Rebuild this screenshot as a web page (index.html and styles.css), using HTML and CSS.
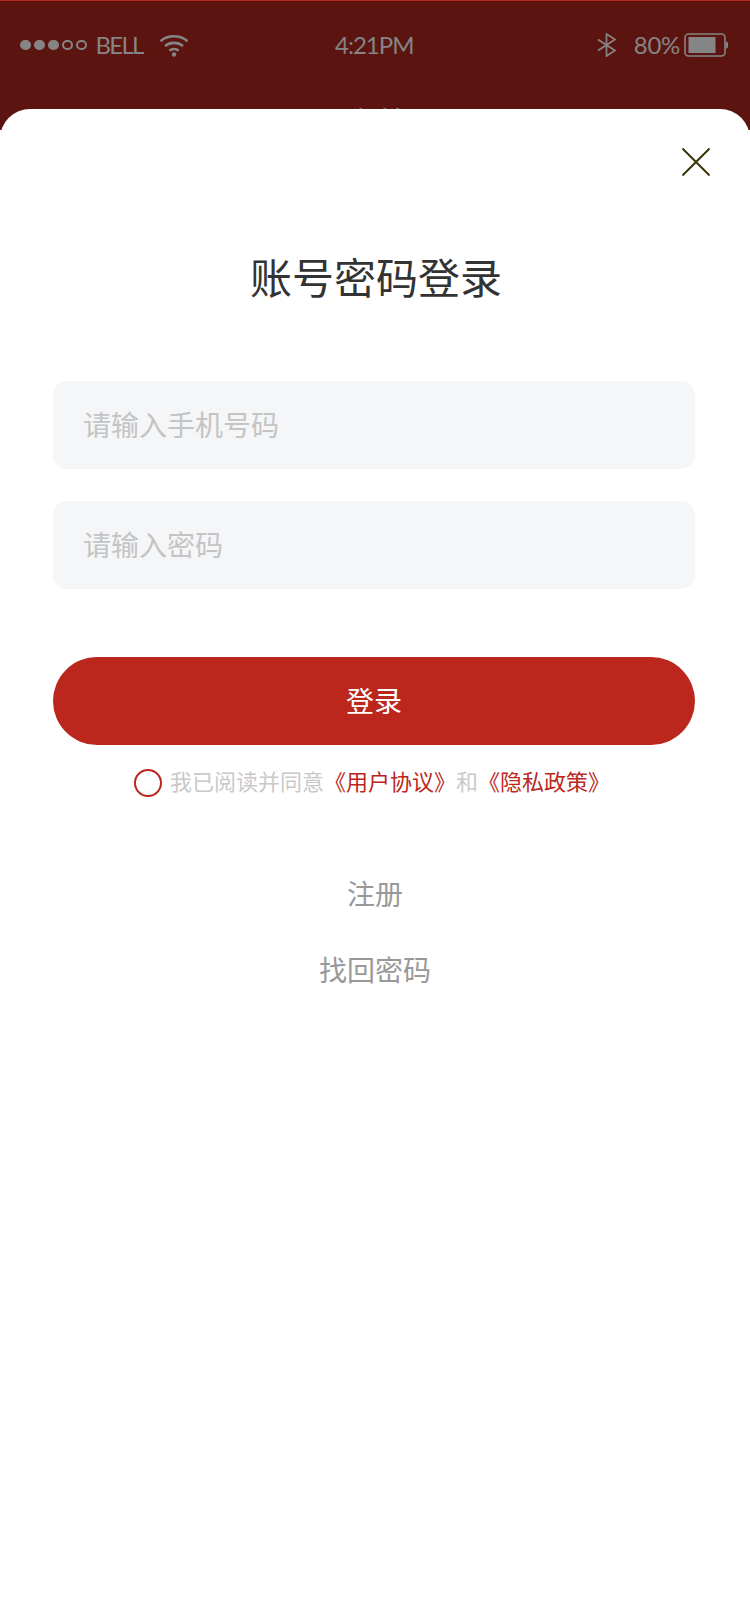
FILE: index.html
```html
<!DOCTYPE html>
<html lang="zh-CN">
<head>
<meta charset="utf-8">
<title>账号密码登录</title>
<link rel="stylesheet" href="styles.css">
</head>
<body>
<div class="screen">
  <header class="top">
    <div class="status">
      <div class="status-left">
        <span class="signal"><i class="dot on"></i><i class="dot on"></i><i class="dot on"></i><i class="dot"></i><i class="dot"></i></span>
        <span class="carrier">BELL</span>
        <svg class="wifi" width="30" height="24" viewBox="0 0 30 24" fill="none" stroke="#858585" stroke-width="2.6">
          <path d="M1.500 8.200C8.800 1.600 21.200 1.600 28.500 8.200"/>
          <path d="M6 13C11 8.800 19 8.800 24 13"/>
          <path d="M10.400 17.600C13 15.600 17 15.600 19.600 17.600"/>
          <circle cx="15" cy="21.500" r="2.200" fill="#858585" stroke="none"/>
        </svg>
      </div>
      <span class="clock">4:21PM</span>
      <div class="status-right">
        <svg class="bt" width="20" height="24" viewBox="0 0 20 24" fill="none" stroke="#858585" stroke-width="1.700">
          <path d="M1 6.500L18 17.500L9.500 23V1L18 6.500L1 17.500"/>
        </svg>
        <span class="pct">80%</span>
        <svg class="battery" width="44" height="24" viewBox="0 0 44 24" fill="none">
          <rect x="1" y="1" width="40" height="22" rx="3.500" stroke="#858585" stroke-width="1.600"/>
          <rect x="4.500" y="4" width="27" height="16" fill="#858585"/>
          <path d="M42 8.500c1.400 0 2 .8 2 2v3c0 1.200-.6 2-2 2z" fill="#858585"/>
        </svg>
      </div>
    </div>
    <h2 class="page-title">我的</h2>
  </header>

  <section class="sheet">
    <button class="close" type="button" aria-label="关闭">
      <svg width="28" height="28" viewBox="0 0 28 28" stroke="#3b3408" stroke-width="2" fill="none">
        <path d="M.5 .5L27.500 27.500M27.500 .5L.5 27.500"/>
      </svg>
    </button>
    <h1 class="title">账号密码登录</h1>
    <form class="form">
      <div class="field">请输入手机号码</div>
      <div class="field">请输入密码</div>
      <div class="submit">登录</div>
    </form>
    <p class="agree">
      <i class="check"></i>
      <span class="agree-text">我已阅读并同意<a class="link">《用户协议》</a>和<a class="link">《隐私政策》</a></span>
    </p>
    <nav class="more">
      <a>注册</a>
      <a>找回密码</a>
    </nav>
  </section>
</div>
</body>
</html>
```
FILE: styles.css
```css
* { box-sizing: border-box; }

html, body {
  margin: 0;
  padding: 0;
  background: #fff;
}

body {
  font-family: "Noto Sans CJK SC", "Open Sans", sans-serif;
}

.screen {
  position: relative;
  width: 750px;
  height: 1624px;
  overflow: hidden;
  background: #fff;
}

/* Dimmed app header behind the login sheet */
.top {
  height: 130px;
  background: #5b140f;
  border-top: 1px solid #bb271c;
  color: #858585;
}

.status {
  display: flex;
  align-items: center;
  justify-content: space-between;
  height: 88px;
  padding: 0 22px 0 20px;
  position: relative;
  font-family: "Lato", sans-serif;
  font-size: 24px;
}

.status-left, .status-right {
  display: flex;
  align-items: center;
}

.signal {
  display: flex;
  gap: 3.500px;
}

.dot {
  width: 10.500px;
  height: 10.500px;
  border-radius: 50%;
  border: 2px solid #858585;
}

.dot.on { background: #858585; }

.carrier {
  margin: 0 0 2px 9px;
  letter-spacing: -1.700px;
}

.wifi { margin-left: 16px; }

.clock {
  position: absolute;
  left: 335px;
  top: 43px;
  transform: translateY(-50%);
  letter-spacing: -1px;
}

.bt { margin-right: 17px; }

.pct {
  margin: 0 4px 2px 0;
  letter-spacing: -.3px;
}

.page-title {
  margin: 9px 0 0;
  text-align: center;
  font-size: 36px;
  line-height: 50px;
  font-weight: 400;
  color: #8a8a8a;
}

/* Login sheet */
.sheet {
  position: absolute;
  left: 0;
  right: 0;
  top: 109px;
  bottom: 0;
  background: #fff;
  border-radius: 30px 30px 0 0;
  padding: 0 55px 0 53px;
}

.close {
  position: absolute;
  top: 39px;
  right: 40px;
  width: 28px;
  height: 28px;
  padding: 0;
  border: 0;
  background: none;
  display: block;
}

.close svg { display: block; }

.title {
  margin: 0;
  padding: 137px 0 0 4px;
  height: 272px;
  text-align: center;
  font-size: 42px;
  line-height: 60px;
  font-weight: 400;
  color: #333;
}

.form {
  display: flex;
  flex-direction: column;
  gap: 32px;
}

.field {
  height: 88px;
  padding-left: 30px;
  border-radius: 14px;
  background: #f5f6f8;
  color: #c4c4c4;
  font-size: 28px;
  line-height: 86px;
}

.submit {
  margin-top: 36px;
  height: 88px;
  border-radius: 44px;
  background: #bb271c;
  color: #fff;
  font-size: 28px;
  line-height: 86px;
  text-align: center;
}

.agree {
  display: flex;
  align-items: center;
  justify-content: center;
  margin: 24px 0 0;
  height: 28px;
  font-size: 22px;
  color: #c9c9c9;
  padding-right: 4px;
}

.agree-text { margin-bottom: 6px; }

.check {
  width: 28px;
  height: 28px;
  border-radius: 50%;
  border: 2px solid #bb271c;
  margin-right: 8px;
}

.link { color: #bb271c; }

.more {
  display: flex;
  flex-direction: column;
  align-items: center;
  gap: 36px;
  margin-top: 76px;
  padding-left: 2px;
  font-size: 28px;
  line-height: 40px;
  color: #999;
}
```
